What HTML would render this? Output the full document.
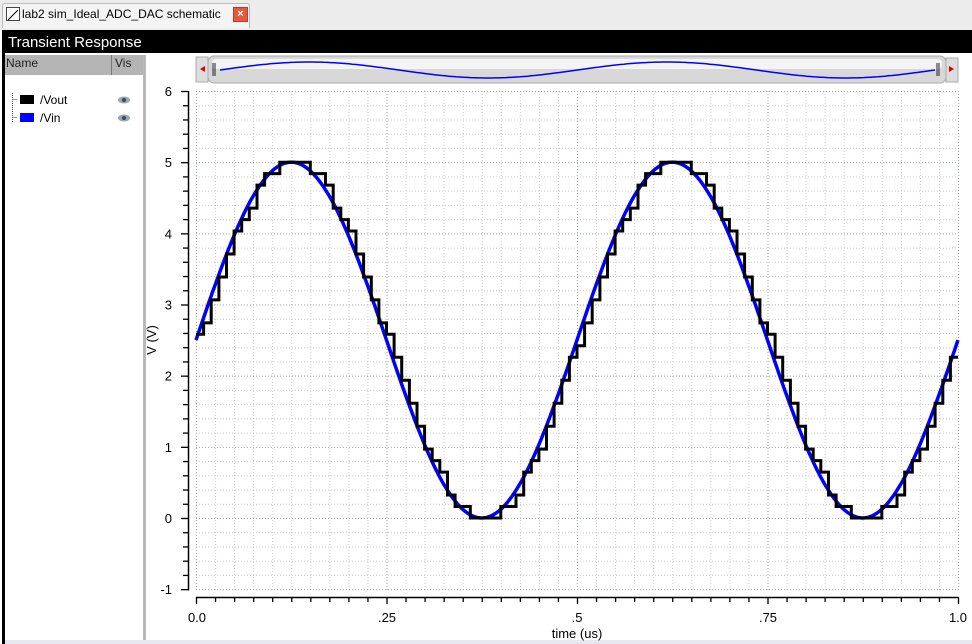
<!DOCTYPE html>
<html><head><meta charset="utf-8"><style>
body{margin:0;width:972px;height:644px;overflow:hidden;background:#fff;font-family:"Liberation Sans",sans-serif;position:relative}
.abs{position:absolute}
</style></head><body>
<div class="abs" style="left:0;top:0;width:972px;height:30px;background:#ececec"></div>
<div class="abs" style="left:2px;top:3px;width:246px;height:24px;border:1px solid #bbb;border-bottom:none;background:#f4f4f4;border-radius:3px 3px 0 0"></div>
<div class="abs" style="left:6px;top:7px;width:12px;height:12px;border:1px solid #444;background:#fff"><svg width="12" height="12"><path d="M1 11L11 1" stroke="#000"/></svg></div>
<div class="abs" style="left:22px;top:7px;font-size:12px;color:#000;white-space:nowrap">lab2 sim_Ideal_ADC_DAC schematic</div>
<div class="abs" style="left:233px;top:7px;width:13px;height:13px;background:#e05a3c;border:1px solid #c33;color:#fff;font-size:11px;line-height:13px;text-align:center;font-weight:bold">×</div>
<div class="abs" style="left:2px;top:30px;width:970px;height:614px;background:#000"></div>
<div class="abs" style="left:5px;top:53px;width:967px;height:588px;background:#fff"></div>
<div class="abs" style="left:8px;top:34px;font-size:15px;color:#fff">Transient Response</div>
<div class="abs" style="left:5px;top:55px;width:139px;height:20px;background:#b4b4b4"></div>
<div class="abs" style="left:111px;top:55px;width:1px;height:20px;background:#777"></div>
<div class="abs" style="left:6px;top:56px;font-size:12px;color:#222">Name</div>
<div class="abs" style="left:115px;top:56px;font-size:12px;color:#222">Vis</div>
<div class="abs" style="left:143px;top:55px;width:3px;height:586px;background:#b8b8b8"></div>
<div class="abs" style="left:5px;top:640px;width:967px;height:4px;background:#e8e8f0"></div>
<svg class="abs" style="left:0;top:0" width="972" height="644">
<path d="M12.5 93V123M12.5 99.5H17M12.5 117.5H17" stroke="#444" stroke-dasharray="1,1"/>
<rect x="20" y="95" width="14" height="9" fill="#000"/><rect x="20" y="113" width="14" height="9" fill="#0000ff"/>
<text x="40" y="104" font-size="12" font-family="Liberation Sans">/Vout</text>
<text x="40" y="122" font-size="12" font-family="Liberation Sans">/Vin</text>
<ellipse cx="124" cy="100" rx="6" ry="3.5" fill="#9aa"/><circle cx="124" cy="100" r="2" fill="#446"/>
<ellipse cx="124" cy="118" rx="6" ry="3.5" fill="#9aa"/><circle cx="124" cy="118" r="2" fill="#446"/>
<rect x="196" y="57" width="12" height="25" fill="#ddd" stroke="#aaa"/>
<path d="M200 69L205 66V72Z" fill="#d00"/>
<rect x="208" y="56" width="738" height="27" rx="6" fill="#d8d8d8" stroke="#aaa"/>
<rect x="212" y="59" width="730" height="10" rx="4" fill="#f4f4f4"/>
<path d="M213 63V76M215 63V76M937 63V76M939 63V76" stroke="#222"/>
<rect x="946" y="58" width="12" height="24" fill="#ddd" stroke="#aaa"/>
<path d="M954 69L949 66V72Z" fill="#d00"/>
<path id="mini" fill="none" stroke="#00f" stroke-width="1.5"/>
<g id="grid"></g>
<path d="M188.5 91V590.5M196 597.5H958" stroke="#000" stroke-width="1.5" fill="none"/>
<g id="ticks" stroke="#000" stroke-width="1.3"></g>
<g font-size="13" font-family="Liberation Sans" text-anchor="end" id="ylab"></g>
<g font-size="13" font-family="Liberation Sans" text-anchor="middle">
<text x="197" y="622">0.0</text><text x="387" y="622">.25</text><text x="577" y="622">.5</text><text x="768" y="622">.75</text><text x="958" y="622">1.0</text>
<text x="577" y="638">time (us)</text>
</g>
<text x="0" y="0" font-size="13" font-family="Liberation Sans" text-anchor="middle" transform="translate(156 340) rotate(-90)">V (V)</text>
<path id="vin" fill="none" stroke="#0000ff" stroke-width="3.5"/>
<path id="vout" fill="none" stroke="#000" stroke-width="3"/>
<path id="vin2" fill="none" stroke="#0000ff" stroke-width="2"/>
</svg>
<script>
var X0=196,X1=958,Y6=91,Y0=518,k=(Y0-Y6)/6;
function X(t){return X0+(X1-X0)*t}function Y(v){return Y0-v*k}
var g='',t='',yl='';
for(var i=0;i<=40;i++){var x=X(i/40);g+='<path d="M'+(x+.5)+' 91V590" stroke="'+(i%10==0?'#9a9':'#ccc')+'" stroke-dasharray="1,2"/>';}
for(var j=-5;j<=30;j++){var y=Y(j/5);g+='<path d="M196 '+(y+.5)+'H958" stroke="'+(j%5==0?'#9a9':'#ccc')+'" stroke-dasharray="1,2"/>';
 t+='<path d="M'+(j%5==0?181:183)+' '+(y+.5)+'H188"/>';}
for(var v=-1;v<=6;v++)yl+='<text x="172" y="'+(Y(v)+5)+'">'+v+'</text>';
for(var i=0;i<=40;i++){var x=X(i/40);t+='<path d="M'+(x+.5)+' 597V'+(i%10==0?604:602)+'"/>';}
document.getElementById('grid').innerHTML=g;document.getElementById('ticks').innerHTML=t;document.getElementById('ylab').innerHTML=yl;
function f(t){return 2.5+2.5*Math.sin(2*Math.PI*t/0.5)}
var p='';for(var i=0;i<=400;i++){var tt=i/400;p+=(i?'L':'M')+X(tt).toFixed(1)+' '+Y(f(tt)).toFixed(1);}
document.getElementById('vin').setAttribute('d',p);
var n=100,q='';
for(var i=0;i<n;i++){var tt=i/n;var v=Math.round(f(tt)/5*31)*5/31;var x=X(tt),x2=X((i+1)/n);
 q+=(i?'L':'M')+x.toFixed(1)+' '+Y(v).toFixed(1)+'L'+x2.toFixed(1)+' '+Y(v).toFixed(1);}
document.getElementById('vout').setAttribute('d',q);
var m='';for(var i=0;i<=200;i++){var tt=i/200;m+=(i?'L':'M')+(220+715*tt).toFixed(1)+' '+(70-8*Math.sin(4*Math.PI*tt)).toFixed(1);}
document.getElementById('mini').setAttribute('d',m);
</script>
</body></html>
